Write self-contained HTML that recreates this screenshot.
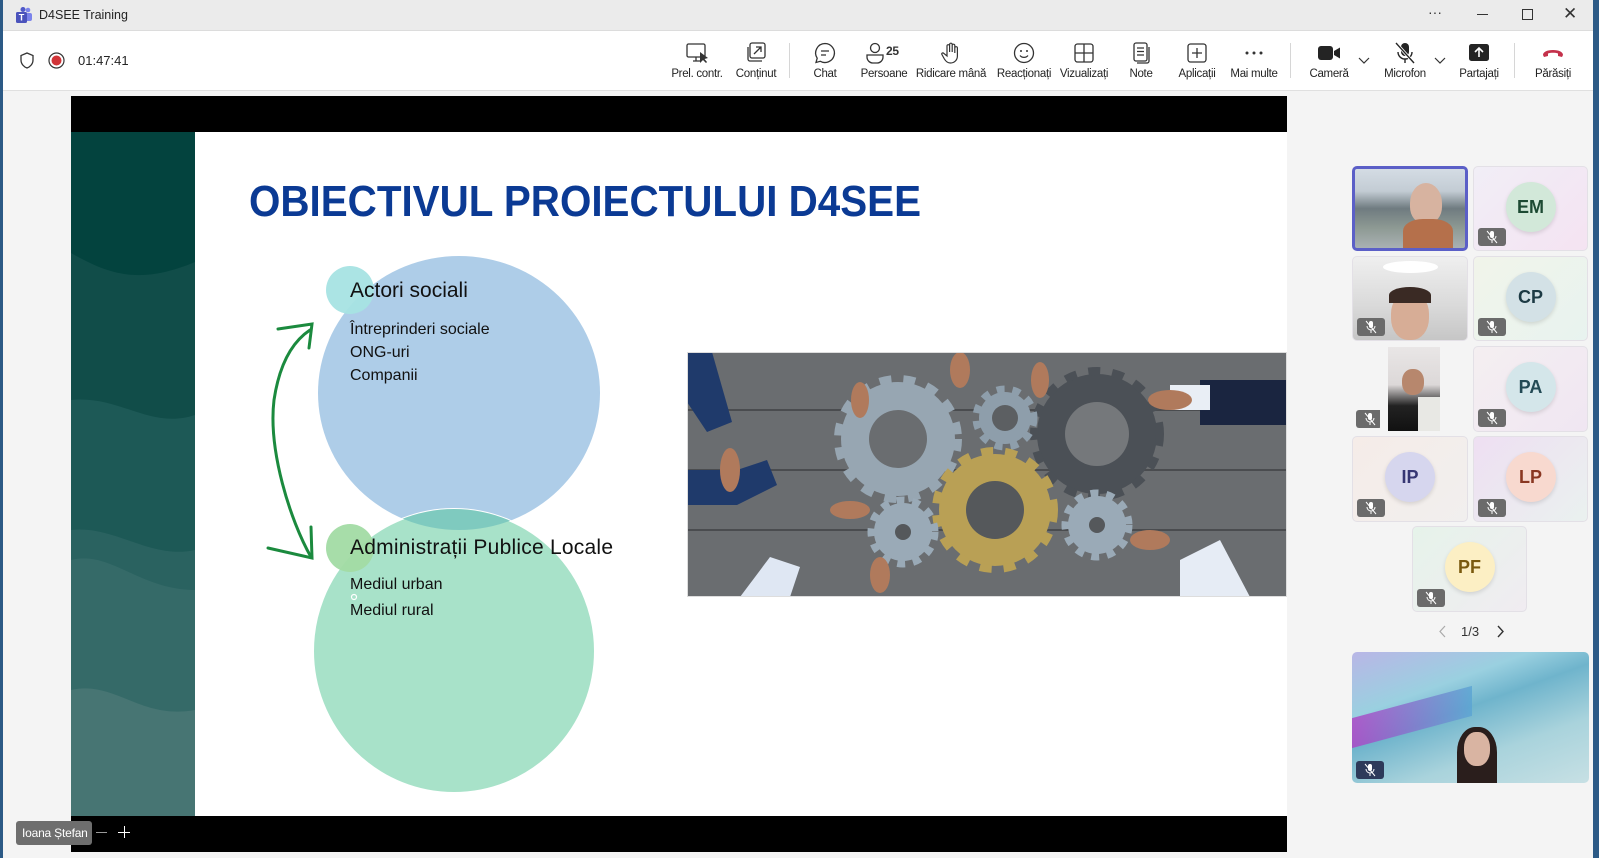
<!DOCTYPE html>
<html><head><meta charset="utf-8"><style>
*{margin:0;padding:0;box-sizing:border-box}
body{width:1599px;height:858px;overflow:hidden;background:#2c5a86;font-family:"Liberation Sans",sans-serif;position:relative}
.win{position:absolute;left:3px;top:0;width:1590px;height:858px;background:#f4f4f4}
.titlebar{position:absolute;left:0;top:0;width:1590px;height:31px;background:#ebebeb;border-bottom:1px solid #dcdcdc}
.tb{position:absolute;left:0;top:31px;width:1590px;height:60px;background:#fff;border-bottom:1px solid #e0e0e0}
.btn{position:absolute;top:0;height:60px;text-align:center;font-size:11.5px;color:#242424;letter-spacing:-0.3px}
.btn svg{position:absolute;left:50%;top:10px;transform:translateX(-50%)}
.btn span{position:absolute;left:50%;top:37px;transform:translateX(-50%);white-space:nowrap}
.div{position:absolute;top:12px;width:1px;height:35px;background:#d6d6d6}
.tile{position:absolute;border-radius:5px;border:1px solid #e3e0e6;overflow:hidden}
.av{position:absolute;left:50%;top:50%;width:50px;height:50px;margin:-27px 0 0 -25px;border-radius:50%;font-weight:bold;font-size:18px;text-align:center;line-height:50px;box-shadow:0 2px 4px rgba(0,0,0,.12)}
.mute{position:absolute;left:4px;bottom:4px;width:28px;height:18px;background:#6b6b6b;border-radius:3px}
.mute svg{position:absolute;left:7px;top:2px}
</style></head><body>
<div class="win">
<div class="titlebar">
 <svg style="position:absolute;left:12px;top:7px" width="18" height="17" viewBox="0 0 18 17"><circle cx="13" cy="3" r="2.3" fill="#7b83eb"/><rect x="10" y="6" width="7" height="8" rx="2" fill="#7b83eb"/><circle cx="8" cy="2.5" r="2.5" fill="#5059c9"/><rect x="1" y="5" width="11" height="11" rx="1.5" fill="#4b53bc"/><text x="6.5" y="13.5" font-size="9" font-weight="bold" fill="#fff" text-anchor="middle" font-family="Liberation Sans">T</text></svg>
 <div style="position:absolute;left:36px;top:8px;font-size:12.5px;color:#242424">D4SEE Training</div>
 <div style="position:absolute;left:1425px;top:4px;font-size:14px;color:#333">···</div>
 <div style="position:absolute;left:1474px;top:14px;width:11px;height:1px;background:#333"></div>
 <div style="position:absolute;left:1519px;top:9px;width:11px;height:11px;border:1px solid #333"></div>
 <div style="position:absolute;left:1560px;top:4px;font-size:17px;color:#333">✕</div>
</div>
<div class="tb">
 <svg style="position:absolute;left:17px;top:21px" width="14" height="17" viewBox="0 0 14 17"><path d="M7 1 L13 3.5 V8 C13 12 10 15 7 16 C4 15 1 12 1 8 V3.5 Z" fill="none" stroke="#333" stroke-width="1.3"/></svg>
 <svg style="position:absolute;left:45px;top:21px" width="17" height="17"><circle cx="8.5" cy="8.5" r="7.5" fill="none" stroke="#333" stroke-width="1.2"/><circle cx="8.5" cy="8.5" r="5" fill="#d13438"/></svg>
 <div style="position:absolute;left:75px;top:22px;font-size:13px;color:#242424">01:47:41</div>

 <div class="btn" style="left:664px;width:60px"><svg width="24" height="24" viewBox="0 0 24 24"><rect x="2" y="3" width="18" height="13" rx="1.5" fill="none" stroke="#333" stroke-width="1.3"/><path d="M8 20h7M11 16v4" stroke="#333" stroke-width="1.3"/><path d="M15 11 L15 22 L18 19 L21 22 L22 21 L19.5 18 L23 17 Z" fill="#333"/></svg><span>Prel. contr.</span></div>
 <div class="btn" style="left:725px;width:56px"><svg width="24" height="24" viewBox="0 0 24 24"><rect x="6" y="2" width="15" height="15" rx="2" fill="none" stroke="#333" stroke-width="1.3"/><path d="M4 6v12a2 2 0 0 0 2 2h12" fill="none" stroke="#333" stroke-width="1.3"/><path d="M10 13l7-7M12 6h5v5" fill="none" stroke="#333" stroke-width="1.3"/></svg><span>Conținut</span></div>
 <div class="div" style="left:786px"></div>
 <div class="btn" style="left:800px;width:44px"><svg width="24" height="24" viewBox="0 0 24 24"><path d="M12 2.5a9.5 9.5 0 1 1-4.7 17.8L3 21.5l1.2-4.3A9.5 9.5 0 0 1 12 2.5z" fill="none" stroke="#333" stroke-width="1.3"/><path d="M8 10h8M8 14h5" stroke="#333" stroke-width="1.3"/></svg><span>Chat</span></div>
 <div class="btn" style="left:853px;width:56px"><svg width="40" height="24" viewBox="0 0 40 24"><circle cx="11" cy="7" r="4.5" fill="none" stroke="#333" stroke-width="1.3"/><path d="M3 14h16v2a6 6 0 0 1-6 6h-4a6 6 0 0 1-6-6z" fill="none" stroke="#333" stroke-width="1.3"/><text x="22" y="14" font-size="12" font-weight="bold" fill="#333" font-family="Liberation Sans">25</text></svg><span>Persoane</span></div>
 <div class="btn" style="left:912px;width:72px"><svg width="24" height="24" viewBox="0 0 24 24"><path d="M8 12V5a1.3 1.3 0 0 1 2.6 0v6V3.5a1.3 1.3 0 0 1 2.6 0V11V4.5a1.3 1.3 0 0 1 2.6 0V12V7a1.3 1.3 0 0 1 2.6 0v8c0 4-3 7-7 7-3 0-4.5-1.5-6-4l-2.5-4.5c-.6-1 .8-2.2 1.700-1.3L8 15z" fill="none" stroke="#333" stroke-width="1.2"/></svg><span>Ridicare mână</span></div>
 <div class="btn" style="left:990px;width:62px"><svg width="24" height="24" viewBox="0 0 24 24"><circle cx="12" cy="12" r="9.5" fill="none" stroke="#333" stroke-width="1.3"/><circle cx="9" cy="10" r="1" fill="#333"/><circle cx="15" cy="10" r="1" fill="#333"/><path d="M8 14.5c2 2.5 6 2.5 8 0" fill="none" stroke="#333" stroke-width="1.3"/></svg><span>Reacționați</span></div>
 <div class="btn" style="left:1053px;width:56px"><svg width="24" height="24" viewBox="0 0 24 24"><rect x="3" y="3" width="18" height="18" rx="2.5" fill="none" stroke="#333" stroke-width="1.3"/><path d="M12 3v18M3 12h18" stroke="#333" stroke-width="1.3"/></svg><span>Vizualizați</span></div>
 <div class="btn" style="left:1116px;width:44px"><svg width="24" height="24" viewBox="0 0 24 24"><rect x="5" y="2" width="13" height="18" rx="2" fill="none" stroke="#333" stroke-width="1.3"/><path d="M20 6v14a2 2 0 0 1-2 2H8" fill="none" stroke="#333" stroke-width="1.3"/><path d="M8 7h7M8 10.5h7M8 14h7" stroke="#333" stroke-width="1.2"/></svg><span>Note</span></div>
 <div class="btn" style="left:1168px;width:52px"><svg width="24" height="24" viewBox="0 0 24 24"><rect x="3" y="3" width="18" height="18" rx="2.5" fill="none" stroke="#333" stroke-width="1.3"/><path d="M12 7v10M7 12h10" stroke="#333" stroke-width="1.3"/></svg><span>Aplicații</span></div>
 <div class="btn" style="left:1222px;width:58px"><svg width="24" height="24" viewBox="0 0 24 24"><circle cx="5" cy="12" r="1.5" fill="#333"/><circle cx="12" cy="12" r="1.5" fill="#333"/><circle cx="19" cy="12" r="1.5" fill="#333"/></svg><span>Mai multe</span></div>
 <div class="div" style="left:1287px"></div>
 <div class="btn" style="left:1300px;width:52px"><svg width="24" height="24" viewBox="0 0 24 24"><rect x="1" y="5" width="15" height="14" rx="3" fill="#242424"/><path d="M17 10l6-3.5v11L17 14z" fill="#242424"/></svg><span>Cameră</span></div>
 <svg style="position:absolute;left:1355px;top:26px" width="12" height="8"><path d="M1 1l5 5 5-5" fill="none" stroke="#333" stroke-width="1.2"/></svg>
 <div class="btn" style="left:1373px;width:58px"><svg width="24" height="24" viewBox="0 0 24 24"><rect x="8" y="2" width="8" height="13" rx="4" fill="#242424"/><path d="M5 11a7 7 0 0 0 14 0M12 18v4" fill="none" stroke="#242424" stroke-width="1.4"/><path d="M3 2l18 20" stroke="#fff" stroke-width="3"/><path d="M3 2l18 20" stroke="#242424" stroke-width="1.4"/></svg><span>Microfon</span></div>
 <svg style="position:absolute;left:1431px;top:26px" width="12" height="8"><path d="M1 1l5 5 5-5" fill="none" stroke="#333" stroke-width="1.2"/></svg>
 <div class="btn" style="left:1450px;width:52px"><svg width="24" height="24" viewBox="0 0 24 24"><rect x="2" y="3" width="20" height="17" rx="2.5" fill="#242424"/><path d="M12 16V7M8 11l4-4 4 4" fill="none" stroke="#fff" stroke-width="1.6"/></svg><span>Partajați</span></div>
 <div class="div" style="left:1511px"></div>
 <div class="btn" style="left:1524px;width:52px"><svg width="26" height="24" viewBox="0 0 26 24"><path d="M3 14c0-3 4-5 10-5s10 2 10 5l-1 2-4-1v-2.5c-1.5-.6-3-.8-5-.8s-3.5.2-5 .8V15l-4 1z" fill="#c4314b"/></svg><span>Părăsiți</span></div>
</div>

<svg style="position:absolute;left:68px;top:96px" width="1216" height="756" viewBox="71 96 1216 756">
 <defs>
  <clipPath id="gc"><ellipse cx="454" cy="651" rx="141" ry="142"/></clipPath>
  <clipPath id="ic"><rect x="687" y="352" width="600" height="245"/></clipPath>
 </defs>
 <rect x="71" y="96" width="1216" height="756" fill="#000"/>
 <rect x="195" y="132" width="1092" height="684" fill="#fff"/>
 <rect x="71" y="132" width="124" height="684" fill="#03433e"/>
 <path d="M71 253 C110 275 140 285 195 262 V816 H71Z" fill="#114d49"/>
 <path d="M71 400 C120 395 150 430 195 415 V816 H71Z" fill="#1d5956"/>
 <path d="M71 530 C115 525 150 560 195 550 V816 H71Z" fill="#2a6260"/>
 <path d="M71 560 C110 550 140 590 195 590 V816 H71Z" fill="#356a68"/>
 <path d="M71 690 C115 680 140 720 195 710 V816 H71Z" fill="#477573"/>
 <text x="249" y="216" font-family="Liberation Sans" font-weight="bold" font-size="44" fill="#0b3a94" textLength="672" lengthAdjust="spacingAndGlyphs">OBIECTIVUL PROIECTULUI D4SEE</text>
 <ellipse cx="459" cy="393" rx="141" ry="137" fill="#aecde8"/>
 <ellipse cx="454" cy="651" rx="141" ry="142" fill="#a8e2c9" stroke="#fff" stroke-width="2"/>
 <ellipse cx="459" cy="393" rx="141" ry="137" fill="#7fcabf" clip-path="url(#gc)"/>
 <circle cx="350" cy="290" r="24" fill="#a7e3e3" opacity=".95"/>
 <circle cx="350" cy="548" r="24" fill="#a2dba4" opacity=".95"/>
 <g font-family="Liberation Sans" fill="#111">
  <text x="350" y="297" font-size="21">Actori sociali</text>
  <text x="350" y="334" font-size="16">Întreprinderi sociale</text>
  <text x="350" y="357" font-size="16">ONG-uri</text>
  <text x="350" y="380" font-size="16">Companii</text>
  <text x="350" y="554" font-size="21" textLength="263">Administrații Publice Locale</text>
  <text x="350" y="589" font-size="16">Mediul urban</text>
  <text x="350" y="615" font-size="16">Mediul rural</text>
 </g>
 <circle cx="354" cy="597" r="2.5" fill="none" stroke="#fff" stroke-width="1.2"/>
 <g fill="none" stroke="#1b8a3e" stroke-width="3" stroke-linecap="round">
  <path d="M311 557 C290 520 268 450 274 400 C280 360 295 340 310 330"/>
  <path d="M278 329 L312 324 L309 348"/>
  <path d="M268 548 L312 558 L311 527"/>
 </g>
 <g clip-path="url(#ic)">
  <rect x="687" y="352" width="600" height="245" fill="#6a6d70"/>
  <g stroke="#4a4c4f" stroke-width="2"><path d="M687 410H1287M687 470H1287M687 530H1287"/></g>
  <path d="M687 352h25l20 70 -25 10 -20-30z" fill="#1f3a6b"/>
  <path d="M687 470h50l30 -10 10 25 -40 20h-50z" fill="#1f3a6b"/>
  <path d="M1200 380h87v45h-87z" fill="#1a2540"/><path d="M1170 385h40v25h-40z" fill="#e9eef5"/>
  <path d="M1180 560l40-20 30 57h-70z" fill="#e6ecf5"/>
  <path d="M740 597l30-40 30 10-10 30z" fill="#dfe7f3"/>
  <g>
   <circle cx="898" cy="439" r="57" fill="#97a6b2"/><circle cx="898" cy="439" r="60" fill="none" stroke="#97a6b2" stroke-width="8" stroke-dasharray="12 12"/><circle cx="898" cy="439" r="29" fill="#6a6d70"/>
   <circle cx="1097" cy="434" r="60" fill="#4b5056"/><circle cx="1097" cy="434" r="63" fill="none" stroke="#4b5056" stroke-width="8" stroke-dasharray="12 12"/><circle cx="1097" cy="434" r="32" fill="#75787b"/>
   <circle cx="1005" cy="418" r="26" fill="#8e9eab"/><circle cx="1005" cy="418" r="29" fill="none" stroke="#8e9eab" stroke-width="7" stroke-dasharray="8 8"/><circle cx="1005" cy="418" r="13" fill="#5c5f62"/>
   <circle cx="995" cy="510" r="56" fill="#b9a055"/><circle cx="995" cy="510" r="59" fill="none" stroke="#b9a055" stroke-width="8" stroke-dasharray="12 12"/><circle cx="995" cy="510" r="29" fill="#55585b"/>
   <circle cx="903" cy="532" r="29" fill="#9aaab7"/><circle cx="903" cy="532" r="32" fill="none" stroke="#9aaab7" stroke-width="7" stroke-dasharray="8 8"/><circle cx="903" cy="532" r="8" fill="#55585b"/>
   <circle cx="1097" cy="525" r="29" fill="#9aaab7"/><circle cx="1097" cy="525" r="32" fill="none" stroke="#9aaab7" stroke-width="7" stroke-dasharray="8 8"/><circle cx="1097" cy="525" r="8" fill="#55585b"/>
  </g>
  <g fill="#b07a5c"><ellipse cx="730" cy="470" rx="10" ry="22"/><ellipse cx="860" cy="400" rx="9" ry="18"/><ellipse cx="850" cy="510" rx="20" ry="9"/><ellipse cx="1170" cy="400" rx="22" ry="10"/><ellipse cx="1150" cy="540" rx="20" ry="10"/><ellipse cx="960" cy="370" rx="10" ry="18"/><ellipse cx="1040" cy="380" rx="9" ry="18"/><ellipse cx="880" cy="575" rx="10" ry="18"/></g>
 </g>
 <rect x="687.5" y="352.5" width="599" height="244" fill="none" stroke="#ddd" stroke-width="1"/>
</svg>
<div style="position:absolute;left:13px;top:821px;width:76px;height:24px;background:#6e6e6e;border-radius:3px;color:#fff;font-size:12px;line-height:24px;padding-left:6px;letter-spacing:-0.2px">Ioana Ștefan</div>
<div style="position:absolute;left:93px;top:832px;width:11px;height:1px;background:#9a9a9a"></div>
<div style="position:absolute;left:115px;top:826px;width:12px;height:12px"><div style="position:absolute;left:0;top:6px;width:12px;height:1px;background:#fff"></div><div style="position:absolute;left:6px;top:0;width:1px;height:12px;background:#fff"></div></div>

<div class="tile" style="left:1349px;top:166px;width:116px;height:85px;border:3px solid #5b5fc7;background:linear-gradient(180deg,#d4dce4 0%,#c3ccd4 28%,#6f7b80 50%,#8e9a94 75%,#a9b1b3 100%)"><div style="position:absolute;left:55px;top:14px;width:32px;height:40px;border-radius:50% 50% 40% 40%;background:#d7b3a0"></div><div style="position:absolute;left:48px;top:50px;width:50px;height:30px;border-radius:40% 40% 0 0;background:#b5704b"></div></div>
<div class="tile" style="left:1470px;top:166px;width:115px;height:85px;background:linear-gradient(135deg,#f1eef6,#f4e3f2)"><div class="av" style="background:#d2e8d9;color:#1d4a33">EM</div><div class="mute"><svg width="14" height="14" viewBox="0 0 14 14"><rect x="5" y="1" width="4" height="7" rx="2" fill="#fff"/><path d="M3 6a4 4 0 0 0 8 0M7 10v3M2 1l10 12" fill="none" stroke="#fff" stroke-width="1"/></svg></div></div>
<div class="tile" style="left:1349px;top:256px;width:116px;height:85px;background:linear-gradient(180deg,#efefef,#d9d9d9 60%,#c6c6c6)"><div style="position:absolute;left:30px;top:4px;width:55px;height:12px;border-radius:50%;background:#fff"></div><div style="position:absolute;left:38px;top:35px;width:38px;height:48px;border-radius:45%;background:#d7ad96"></div><div style="position:absolute;left:36px;top:30px;width:42px;height:16px;border-radius:50% 50% 0 0;background:#3a2a24"></div><div class="mute"><svg width="14" height="14" viewBox="0 0 14 14"><rect x="5" y="1" width="4" height="7" rx="2" fill="#fff"/><path d="M3 6a4 4 0 0 0 8 0M7 10v3M2 1l10 12" fill="none" stroke="#fff" stroke-width="1"/></svg></div></div>
<div class="tile" style="left:1470px;top:256px;width:115px;height:85px;background:linear-gradient(135deg,#f1f4ea,#e8f3ef)"><div class="av" style="background:#d3e1e6;color:#1c3a44">CP</div><div class="mute"><svg width="14" height="14" viewBox="0 0 14 14"><rect x="5" y="1" width="4" height="7" rx="2" fill="#fff"/><path d="M3 6a4 4 0 0 0 8 0M7 10v3M2 1l10 12" fill="none" stroke="#fff" stroke-width="1"/></svg></div></div>
<div style="position:absolute;left:1385px;top:347px;width:52px;height:84px;background:linear-gradient(180deg,#e9e6e6,#dcd8d8 45%,#222 70%,#111)"><div style="position:absolute;left:14px;top:22px;width:22px;height:26px;border-radius:45%;background:#b7876d"></div><div style="position:absolute;left:30px;top:50px;width:22px;height:34px;background:#e8e8e4"></div></div>
<div class="tile" style="left:1349px;top:347px;width:28px;height:85px;border:none;background:none"><div class="mute"><svg width="14" height="14" viewBox="0 0 14 14"><rect x="5" y="1" width="4" height="7" rx="2" fill="#fff"/><path d="M3 6a4 4 0 0 0 8 0M7 10v3M2 1l10 12" fill="none" stroke="#fff" stroke-width="1"/></svg></div></div>
<div class="tile" style="left:1470px;top:346px;width:115px;height:86px;background:linear-gradient(135deg,#f4eff1,#f0e6f2)"><div class="av" style="background:#d4e6ea;color:#234a55">PA</div><div class="mute"><svg width="14" height="14" viewBox="0 0 14 14"><rect x="5" y="1" width="4" height="7" rx="2" fill="#fff"/><path d="M3 6a4 4 0 0 0 8 0M7 10v3M2 1l10 12" fill="none" stroke="#fff" stroke-width="1"/></svg></div></div>
<div class="tile" style="left:1349px;top:436px;width:116px;height:86px;background:linear-gradient(135deg,#f5ece8,#f1efee)"><div class="av" style="background:#d6d6ee;color:#363673">IP</div><div class="mute"><svg width="14" height="14" viewBox="0 0 14 14"><rect x="5" y="1" width="4" height="7" rx="2" fill="#fff"/><path d="M3 6a4 4 0 0 0 8 0M7 10v3M2 1l10 12" fill="none" stroke="#fff" stroke-width="1"/></svg></div></div>
<div class="tile" style="left:1470px;top:436px;width:115px;height:86px;background:linear-gradient(135deg,#eedff2,#eaf1ef)"><div class="av" style="background:#f8d9cf;color:#8a3722">LP</div><div class="mute"><svg width="14" height="14" viewBox="0 0 14 14"><rect x="5" y="1" width="4" height="7" rx="2" fill="#fff"/><path d="M3 6a4 4 0 0 0 8 0M7 10v3M2 1l10 12" fill="none" stroke="#fff" stroke-width="1"/></svg></div></div>
<div class="tile" style="left:1409px;top:526px;width:115px;height:86px;background:linear-gradient(135deg,#e6f3ea,#f0ecf1)"><div class="av" style="background:#fcefc4;color:#7a5a0e">PF</div><div class="mute"><svg width="14" height="14" viewBox="0 0 14 14"><rect x="5" y="1" width="4" height="7" rx="2" fill="#fff"/><path d="M3 6a4 4 0 0 0 8 0M7 10v3M2 1l10 12" fill="none" stroke="#fff" stroke-width="1"/></svg></div></div>
<svg style="position:absolute;left:1436px;top:625px" width="8" height="13"><path d="M6 1L1 6.5 6 12" fill="none" stroke="#aaa" stroke-width="1.2"/></svg>
<div style="position:absolute;left:1458px;top:624px;font-size:13px;color:#333">1/3</div>
<svg style="position:absolute;left:1493px;top:625px" width="8" height="13"><path d="M2 1l5 5.5L2 12" fill="none" stroke="#333" stroke-width="1.4"/></svg>
<div class="tile" style="left:1349px;top:652px;width:237px;height:131px;border:none;background:linear-gradient(160deg,#b9b6e6 0%,#9ad0e0 30%,#6fb4cc 45%,#a9d3dc 70%,#c7e0e4 100%)"><div style="position:absolute;left:0;top:50px;width:120px;height:30px;background:linear-gradient(90deg,#b03fc5,#5aa4d3);transform:skewY(-15deg);opacity:.8"></div><div style="position:absolute;left:105px;top:75px;width:40px;height:56px;border-radius:45% 45% 0 0;background:#2a1e1c"></div><div style="position:absolute;left:112px;top:80px;width:26px;height:34px;border-radius:45%;background:#d9b4a2"></div><div class="mute" style="background:#2d3a5a"><svg width="14" height="14" viewBox="0 0 14 14"><rect x="5" y="1" width="4" height="7" rx="2" fill="#fff"/><path d="M3 6a4 4 0 0 0 8 0M7 10v3M2 1l10 12" fill="none" stroke="#fff" stroke-width="1"/></svg></div></div>
</div>
</body></html>
